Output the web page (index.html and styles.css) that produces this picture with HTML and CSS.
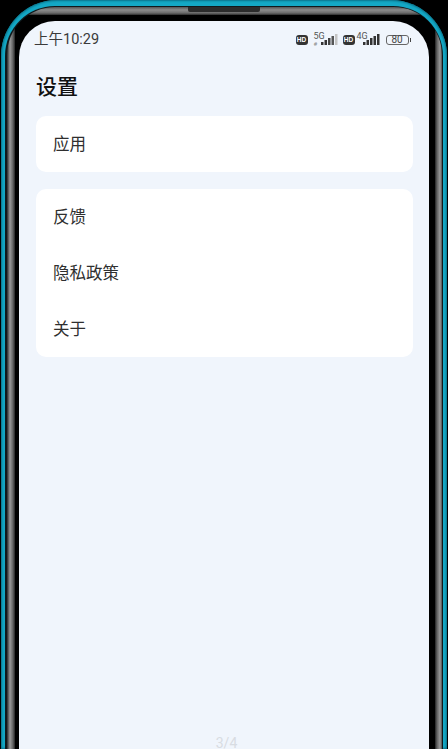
FILE: index.html
```html
<!DOCTYPE html>
<html lang="zh">
<head>
<meta charset="utf-8">
<title>设置</title>
<link rel="stylesheet" href="styles.css">
</head>
<body>
<div class="device">
  <div class="shell-dark">
    <div class="shell-grey">
      <div class="speaker"></div>
      <div class="bezel">
        <main class="screen">
          <header class="status">
            <span class="time">上午10:29</span>
            <div class="status-icons">
              <span class="hd">HD</span>
              <div class="net net-5g">
                <span class="net-label">5G</span>
                <span class="net-hash">#</span>
                <svg class="bars" viewBox="0 0 17 11" width="17" height="11"><rect x="0" y="8" width="2.500" height="3" fill="#333"/><rect x="3.500" y="6" width="2.500" height="5" fill="#333"/><rect x="7" y="4" width="2.500" height="7" fill="#444"/><rect x="10.500" y="2" width="2.500" height="9" fill="#555"/><rect x="14" y="0" width="2.500" height="11" fill="#c4c4c4"/></svg>
              </div>
              <span class="hd">HD</span>
              <div class="net net-4g">
                <span class="net-label">4G</span>
                <svg class="bars" viewBox="0 0 17 11" width="17" height="11"><rect x="0" y="8" width="2.500" height="3" fill="#333"/><rect x="3.500" y="6" width="2.500" height="5" fill="#333"/><rect x="7" y="4" width="2.500" height="7" fill="#333"/><rect x="10.500" y="2" width="2.500" height="9" fill="#333"/><rect x="14" y="0" width="2.500" height="11" fill="#333"/></svg>
              </div>
              <div class="battery"><span class="battery-body">80</span><span class="battery-nib"></span></div>
            </div>
          </header>
          <h1 class="title">设置</h1>
          <section class="card">
            <div class="row">应用</div>
          </section>
          <section class="card">
            <div class="row">反馈</div>
            <div class="row">隐私政策</div>
            <div class="row">关于</div>
          </section>
          <div class="pager">3/4</div>
        </main>
      </div>
    </div>
  </div>
</div>
</body>
</html>
```
FILE: styles.css
```css
* { box-sizing: border-box; }
html, body { margin: 0; padding: 0; }
body {
  width: 448px;
  height: 749px;
  overflow: hidden;
  background: #000;
  font-family: "Noto Sans CJK SC", Roboto, sans-serif;
}
.device {
  width: 446px;
  height: 749px;
  margin-left: 1px;
  padding: 6px 4px 0;
  border-radius: 56px 56px 0 0;
  background: #14a8c5;
  box-shadow: inset 0 0 2px 1px #0b7188;
}
.shell-dark {
  height: 743px;
  padding: 1px 1px 0 2px;
  border-radius: 50px 50px 0 0;
  background: #10191c;
}
.shell-grey {
  position: relative;
  height: 742px;
  padding: 8px 8px 0;
  border-radius: 48px 48px 0 0;
  background:
    linear-gradient(180deg, #555 0, #8c8c8c 3px, #6a6a6a 6px, #2c2c2c 8px, transparent 8px),
    linear-gradient(90deg, #2a2a2a 0, #9a9a9a 3px, #606060 6px, #222 8px, #000 8px, #000 428px, #222 428px, #606060 430px, #9a9a9a 433px, #2a2a2a 436px);
}
.speaker {
  position: absolute;
  left: 181px;
  top: 0;
  width: 72px;
  height: 5px;
  border-radius: 0 0 2px 2px;
  background: #2c2c2c;
}
.bezel {
  height: 734px;
  padding: 6px 5px 0 4px;
  border-radius: 42px 42px 0 0;
  background: #000;
}
.screen {
  display: flex;
  flex-direction: column;
  height: 728px;
  padding: 0 16px 0 17px;
  border-radius: 36px 36px 0 0;
  background: #f0f5fc;
}
.status {
  display: flex;
  align-items: flex-start;
  justify-content: space-between;
  flex: none;
  height: 36px;
}
.time {
  margin: 8px 0 0 -2px;
  font-family: Roboto, "Noto Sans CJK SC", sans-serif;
  font-size: 14.500px;
  line-height: 22px;
  color: #3a3a3a;
}
.status-icons {
  display: flex;
  align-items: flex-start;
  height: 14px;
  margin: 12px 2px 0 0;
}
.hd {
  flex: none;
  width: 12px;
  height: 9.500px;
  margin-top: 2px;
  border-radius: 3px;
  background: #333;
  color: #fff;
  font-family: "Liberation Sans", sans-serif;
  font-size: 6.500px;
  font-weight: 700;
  line-height: 9.500px;
  text-align: center;
}
.net {
  position: relative;
  flex: none;
  height: 14px;
}
.net-5g { width: 35px; }
.net-4g { width: 31px; }
.net-label {
  position: absolute;
  left: 6px;
  top: 0;
  font-family: Roboto, sans-serif;
  font-size: 9px;
  line-height: 6px;
  color: #555;
}
.net-hash {
  position: absolute;
  left: 6px;
  top: 8px;
  font-family: Roboto, sans-serif;
  font-size: 6px;
  line-height: 6px;
  color: #888;
}
.bars {
  position: absolute;
  left: 13px;
  top: 1px;
}
.net-4g .net-label { left: 2px; }
.net-4g .bars { left: 8px; }
.battery {
  display: flex;
  align-items: center;
  height: 10px;
  margin-top: 2px;
}
.battery-body {
  width: 23px;
  height: 10px;
  border: 1px solid #666;
  border-radius: 3px;
  font-family: Roboto, sans-serif;
  font-size: 10px;
  line-height: 8px;
  text-align: center;
  color: #444;
}
.battery-nib {
  width: 1.500px;
  height: 4px;
  margin-left: 1px;
  background: #444;
}
.title {
  flex: none;
  margin: 14px 0 16px 0;
  font-size: 21px;
  line-height: 29px;
  font-weight: 500;
  color: #111;
}
.card {
  flex: none;
  margin-bottom: 16.500px;
  border-radius: 10px;
  background: #fff;
}
.row {
  display: flex;
  align-items: center;
  height: 56px;
  padding: 0 0 2px 17px;
  font-size: 16.500px;
  color: #2f2f2f;
}
.pager {
  flex: none;
  margin: auto 0 0;
  padding-left: 4px;
  font-family: Roboto, sans-serif;
  font-size: 14px;
  line-height: 12px;
  text-align: center;
  color: #d8dce2;
}
```
